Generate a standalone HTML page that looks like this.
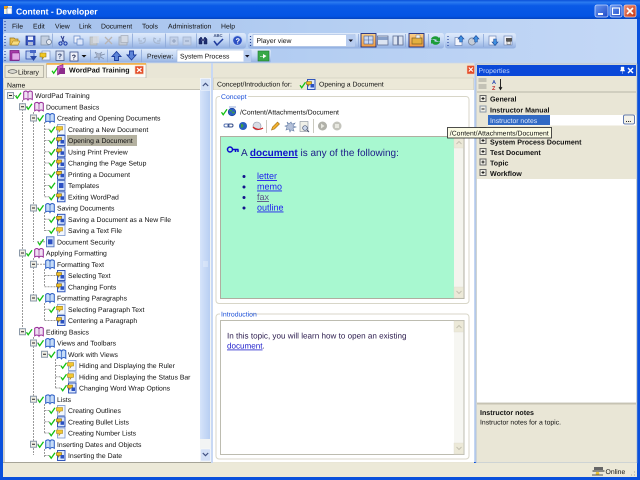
<!DOCTYPE html>
<html><head><meta charset="utf-8"><title>Content - Developer</title>
<style>
html,body{margin:0;padding:0;width:640px;height:480px;overflow:hidden;background:#0a50dc}
svg{display:block}
text{font-family:"Liberation Sans",Arial,sans-serif;font-size:6.85px;fill:#111;white-space:pre;text-rendering:geometricPrecision}
.b{font-weight:bold;font-size:7.1px}
.lk{fill:#2222ee;text-decoration:underline}
</style></head><body>
<svg width="640" height="480" viewBox="0 0 640 480" xmlns="http://www.w3.org/2000/svg">
<defs>
<linearGradient id="tb" x1="0" y1="0" x2="0" y2="1"><stop offset="0" stop-color="#0a50d8"/><stop offset=".12" stop-color="#2a7af0"/><stop offset=".3" stop-color="#0a5ae6"/><stop offset=".85" stop-color="#0454e4"/><stop offset="1" stop-color="#0444c0"/></linearGradient>
<linearGradient id="tool" x1="0" y1="0" x2="0" y2="1"><stop offset="0" stop-color="#dfeafb"/><stop offset=".5" stop-color="#c2d6f4"/><stop offset="1" stop-color="#90aee0"/></linearGradient>
<linearGradient id="band" x1="0" y1="0" x2="1" y2="0"><stop offset="0" stop-color="#a4c0ec"/><stop offset=".5" stop-color="#b4cef2"/><stop offset="1" stop-color="#c4d8f6"/></linearGradient>
<linearGradient id="sb" x1="0" y1="0" x2="1" y2="0"><stop offset="0" stop-color="#d6e4fa"/><stop offset="1" stop-color="#b8cef2"/></linearGradient>
<linearGradient id="btnb" x1="0" y1="0" x2="1" y2="1"><stop offset="0" stop-color="#6a98f0"/><stop offset="1" stop-color="#1c48c8"/></linearGradient>
<linearGradient id="btnr" x1="0" y1="0" x2="1" y2="1"><stop offset="0" stop-color="#ec9078"/><stop offset="1" stop-color="#c83410"/></linearGradient>
<linearGradient id="org" x1="0" y1="0" x2="0" y2="1"><stop offset="0" stop-color="#fbd08a"/><stop offset="1" stop-color="#f29a3c"/></linearGradient>
<g id="c"><path d="M1.500 4.800l1.700 2.400 3.800-5.400" fill="none" stroke="#12c012" stroke-width="1.300"/></g>
<g id="p"><path d="M.7 2C2.600.3 4.600 1 5 2.800 5.400 1 7.400.3 9.300 2V9.500C7.400 8.200 5.600 8.700 5 10 4.400 8.700 2.600 8.200.7 9.500Z" fill="#f0e0f4" stroke="#962a96" stroke-width="1"/><path d="M5 3V9" stroke="#963a96" stroke-width=".7"/></g>
<g id="l"><path d="M.7 2C2.600.3 4.600 1 5 2.800 5.400 1 7.400.3 9.300 2V9.500C7.400 8.200 5.600 8.700 5 10 4.400 8.700 2.600 8.200.7 9.500Z" fill="#c6dcf8" stroke="#2a5cc4" stroke-width="1"/><path d="M5 3V9" stroke="#2a5cc4" stroke-width=".7"/></g>
<g id="y"><rect x="1.500" y=".5" width="7.500" height="10" fill="#f2f6fe" stroke="#7a96cc" stroke-width=".8"/><path d="M.5 2.500H6.500V6H4.500L3 8V6H.5Z" fill="#f4c830" stroke="#a88414" stroke-width=".6"/></g>
<g id="z"><rect x="1.500" y=".5" width="7.500" height="10" fill="#dce8fc" stroke="#2048b4" stroke-width=".9"/><path d="M.5 2.500H5.500V5.500H3.500L2.500 7V5.500H.5Z" fill="#f0c020" stroke="#806010" stroke-width=".6"/><rect x="4.500" y="5" width="3.500" height="3.500" fill="#2a50c0"/></g>
<g id="d"><rect x="1.500" y=".5" width="7.500" height="10" fill="#d4e2fa" stroke="#5072c0" stroke-width=".9"/><rect x="3" y="3" width="4.500" height="5" fill="#2c50c4"/></g>
<g id="e"><rect x=".5" y=".5" width="6" height="6" fill="#f0eee4" stroke="#8a98a8" stroke-width="1"/><path d="M2 3.500H5" stroke="#222" stroke-width="1"/></g>
<g id="x2"><rect x=".5" y=".5" width="6" height="6" fill="#f0eee4" stroke="#666" stroke-width="1"/><path d="M2 3.500H5M3.500 2V5" stroke="#222" stroke-width="1"/></g>
<g id="gr"><path d="M0 0v1M0 3v1M0 6v1M0 9v1" stroke="#27459c" stroke-width="1.200"/></g>
<g id="up"><path d="M0 6L4.500 1 9 6H6.500V10H2.500V6Z" fill="#5c84d8" stroke="#1c3c9c" stroke-width=".9"/></g>
<g id="dn"><path d="M0 5L4.500 10 9 5H6.500V1H2.500V5Z" fill="#5c84d8" stroke="#1c3c9c" stroke-width=".9"/></g>
<g id="us"><path d="M0 4L3 .5 6 4H4.300V7H1.700V4Z" fill="#3f8fe0" stroke="#1c4c9c" stroke-width=".6"/></g>
<g id="ds"><path d="M0 3.500L3 7 6 3.500H4.300V.5H1.700V3.500Z" fill="#3f8fe0" stroke="#1c4c9c" stroke-width=".6"/></g>
<g id="pg"><rect x=".5" y=".5" width="8" height="10" fill="#f4f6fc" stroke="#7088b8" stroke-width=".8"/></g>
</defs>

<!-- frame -->
<rect width="640" height="480" fill="#0a50dc"/>
<rect x="0" y="0" width="640" height="19" fill="url(#tb)"/>
<rect x="3" y="19" width="634" height="44" fill="url(#band)"/>
<!-- title -->
<rect x="4" y="6" width="8" height="8" fill="#f4f0d8"/><path d="M4 6h4v3H4z" fill="#e8a020"/><rect x="7" y="8" width="5" height="6" fill="#fff" stroke="#4070c0" stroke-width=".5"/>
<text x="16" y="14.500" style="font-size:8.600px;font-weight:bold;fill:#fff">Content - Developer</text>
<rect x="595" y="5" width="13" height="12" rx="2" fill="url(#btnb)" stroke="#c8d8fc" stroke-width=".8"/><rect x="598" y="13" width="5" height="2" fill="#fff"/>
<rect x="610" y="5" width="12" height="12" rx="2" fill="url(#btnb)" stroke="#c8d8fc" stroke-width=".8"/><rect x="612.500" y="8" width="7" height="6.500" fill="none" stroke="#fff" stroke-width="1.100"/>
<rect x="624" y="5" width="12" height="12" rx="2" fill="url(#btnr)" stroke="#f0d0c8" stroke-width=".8"/><path d="M627 8l6 6M633 8l-6 6" stroke="#fff" stroke-width="1.600"/>
<!-- menu -->
<use href="#gr" x="5" y="21"/>
<text x="12" y="28.500">File</text><text x="33" y="28.500">Edit</text><text x="55" y="28.500">View</text><text x="79" y="28.500">Link</text><text x="101" y="28.500">Document</text><text x="142" y="28.500">Tools</text><text x="168" y="28.500">Administration</text><text x="221" y="28.500">Help</text>

<!-- toolbar row 1 -->
<rect x="3" y="33" width="243" height="15.500" rx="2.500" fill="url(#tool)"/>
<rect x="248" y="33" width="196" height="15.500" rx="2.500" fill="url(#tool)"/>
<rect x="445" y="33" width="71" height="15.500" rx="2.500" fill="url(#tool)"/>
<use href="#gr" x="5" y="36"/><use href="#gr" x="250.500" y="36"/><use href="#gr" x="448" y="36"/>
<path d="M10 38h4l1 1h3v6h-8z" fill="#eac050" stroke="#9a7414" stroke-width=".7"/><path d="M11 45l2-4h7l-2 4z" fill="#f8dc80" stroke="#9a7414" stroke-width=".5"/>
<rect x="26" y="36" width="9" height="9" fill="#3c58c0" stroke="#18308c" stroke-width=".7"/><rect x="28" y="36.500" width="5" height="3.500" fill="#e8eefc"/><rect x="28" y="42" width="5" height="3" fill="#b0bcd8"/>
<rect x="41" y="36" width="8" height="9" fill="#c4cfe0" stroke="#7c8ca4" stroke-width=".7"/><circle cx="49" cy="42" r="2.500" fill="#e4e8f0" stroke="#6c7c94" stroke-width=".8"/>
<path d="M52.500 33.500v14" stroke="#8ca8d8" stroke-width=".8"/>
<path d="M64 36l-2 6M61 36l3 6" stroke="#2a3a8c" stroke-width="1" fill="none"/><circle cx="60.500" cy="43.500" r="1.600" fill="none" stroke="#1838a8" stroke-width="1"/><circle cx="65.500" cy="43.500" r="1.600" fill="none" stroke="#1838a8" stroke-width="1"/>
<rect x="74" y="36" width="6" height="7" fill="#eef2fc" stroke="#6084c4" stroke-width=".7"/><rect x="77" y="39" width="6" height="6" fill="#dce6fa" stroke="#6084c4" stroke-width=".7"/>
<rect x="90" y="37" width="7" height="8" fill="#c8c8c4" stroke="#a8a8a4" stroke-width=".7" opacity=".8"/><rect x="93" y="36" width="6" height="7" fill="#d8dce4" opacity=".8"/>
<path d="M105 37l7 7M112 37l-7 7" stroke="#b8b4b4" stroke-width="1.300"/>
<rect x="119" y="37" width="8" height="8" fill="#c4ccd8" stroke="#a0a8b4" stroke-width=".8"/><rect x="121" y="35.500" width="7" height="7" fill="#d4dae4" stroke="#a4acb8" stroke-width=".7"/>
<path d="M132.500 33.500v14" stroke="#8ca8d8" stroke-width=".8"/>
<path d="M139 43c5 1 7-1 6-5l-2 1M139 38v3h3" fill="none" stroke="#a4b4cc" stroke-width="1"/>
<path d="M160 43c-5 1-7-1-6-5l2 1M160 38v3h-3" fill="none" stroke="#a4b4cc" stroke-width="1"/>
<path d="M165.500 33.500v14" stroke="#8ca8d8" stroke-width=".8"/>
<rect x="170" y="37" width="8" height="8" fill="#c2d0e8" stroke="#a4b4d0" stroke-width=".8"/><path d="M172 41h4M174 39v4" stroke="#90a0bc"/>
<rect x="183" y="37" width="8" height="8" fill="#c2d0e8" stroke="#a4b4d0" stroke-width=".8"/><path d="M185 41h4" stroke="#90a0bc"/>
<path d="M196.500 33.500v14" stroke="#8ca8d8" stroke-width=".8"/>
<path d="M199 44v-5l2-2 1 1v6zM204 44v-6l1-1 2 2v5z" fill="#1c2c70" stroke="#101c50" stroke-width=".5"/><rect x="201" y="39" width="4" height="2" fill="#404880"/>
<text x="213.500" y="37" style="font-size:4.200px;font-weight:bold;fill:#33487a">ABC</text><path d="M214 41l3 4 6-6" fill="none" stroke="#1e3a9c" stroke-width="1.500"/>
<path d="M229.500 33.500v14" stroke="#8ca8d8" stroke-width=".8"/>
<circle cx="237.500" cy="40.500" r="4.800" fill="#2c50c4" stroke="#b8cef4" stroke-width=".9"/><text x="235.500" y="43.500" style="font-size:7.500px;font-weight:bold;fill:#fff">?</text>
<!-- player view combo -->
<rect x="253" y="34.500" width="102" height="12" fill="#fff" stroke="#9fb8e0" stroke-width=".6"/><rect x="346" y="35" width="9" height="11" fill="#b8cdf0"/><path d="M348.500 39.500h4.500l-2.250 2.500z" fill="#112"/>
<text x="256.500" y="43">Player view</text>
<path d="M358.500 34v13" stroke="#8ca8d8" stroke-width=".8"/>
<rect x="361" y="33.500" width="15" height="13.500" fill="url(#org)" stroke="#1c2c80" stroke-width=".9"/><rect x="364" y="36" width="9" height="8" fill="#c8d8f4" stroke="#5a6c98" stroke-width=".7"/><path d="M368.500 36v8M364 40h9" stroke="#5a6c98" stroke-width=".6"/>
<rect x="377.500" y="36" width="10.500" height="9" fill="#dce4f2" stroke="#5f6f94" stroke-width=".8"/><rect x="378" y="37" width="9.500" height="3" fill="#88a0c8"/>
<rect x="393" y="36" width="10" height="9" fill="#dce4f2" stroke="#5f6f94" stroke-width=".8"/><path d="M398 36v9" stroke="#5f6f94" stroke-width="1.500"/>
<path d="M405.500 34v13" stroke="#8ca8d8" stroke-width=".8"/>
<rect x="409" y="33.500" width="15" height="13.500" fill="url(#org)" stroke="#1c2c80" stroke-width=".9"/><path d="M412 38h10v6h-10z" fill="#e4b040" stroke="#806020" stroke-width=".7"/><path d="M416 35h4v3h-4z" fill="#f4f4f4" stroke="#777" stroke-width=".5"/>
<path d="M428.500 34v13" stroke="#8ca8d8" stroke-width=".8"/>
<path d="M431 39c1-3 6-4 8-1l1-1v4h-4l1-1c-2-1-4-1-5 0z" fill="#1c9c38"/><path d="M440 42c-1 3-6 4-8 1l-1 1v-4h4l-1 1c2 1 4 1 5 0z" fill="#1c9c38"/>
<rect x="455" y="37.500" width="7" height="8" fill="#f4f6fc" stroke="#7088b8" stroke-width=".7"/><use href="#us" x="458" y="35"/>
<circle cx="472" cy="41.500" r="3.600" fill="#c4ccd8" stroke="#6a7a96" stroke-width=".7"/><use href="#us" x="473" y="35"/>
<path d="M483.500 34v13" stroke="#8ca8d8" stroke-width=".8"/>
<rect x="489" y="36" width="7" height="9" fill="#f4f6fc" stroke="#7088b8" stroke-width=".7"/><use href="#ds" x="492" y="38.500"/>
<rect x="504" y="36" width="8" height="9" fill="#eef0f8" stroke="#7088b8" stroke-width=".7"/><rect x="506" y="38" width="6" height="3.500" fill="#555"/><rect x="507" y="41.500" width="3.500" height="3" fill="#e8e8e8" stroke="#444" stroke-width=".4"/>

<!-- toolbar row 2 -->
<rect x="3" y="49" width="268" height="14" rx="2.500" fill="url(#tool)"/>
<use href="#gr" x="5" y="51"/>
<rect x="10" y="50.500" width="9" height="10" fill="#a83aa8" stroke="#70107a" stroke-width=".7"/><rect x="12" y="53" width="7.500" height="7" fill="#e0a8e8" stroke="#70107a" stroke-width=".5"/>
<rect x="26" y="51" width="8" height="8" fill="#b8ccf0" stroke="#2848a8" stroke-width=".8"/><path d="M30 56h7l-3.500 5z" fill="#2848a8"/><path d="M30 50h6v3h-6z" fill="#4868c8"/>
<rect x="42" y="51" width="8" height="9" fill="#f0f4fc" stroke="#7a8fc0" stroke-width=".7"/><path d="M40 53h6v4h-2l-1.500 2v-2h-2.500z" fill="#f2c824" stroke="#9a7810" stroke-width=".6"/>
<rect x="56" y="51" width="8" height="9.500" fill="#dce4f4" stroke="#4a5a88" stroke-width=".8"/><text x="57.800" y="58.500" style="font-size:7px;font-weight:bold;fill:#2a3a68">?</text>
<rect x="70" y="52" width="8" height="9" fill="#f0f2fa" stroke="#3a4c88" stroke-width=".8"/><text x="71.800" y="59.500" style="font-size:7px;font-weight:bold;fill:#101840">?</text>
<path d="M81.500 55h5l-2.500 2.500z" fill="#111"/>
<path d="M90.500 49.500v13" stroke="#8ca8d8" stroke-width=".8"/>
<path d="M95 52l4 2 3-2-2 3 5-1-5 2 4 3-4-2-1 3-1-3-4 1 3-2z" fill="#aab6cc" stroke="#7c8aa4" stroke-width=".5"/>
<path d="M107.500 49.500v13" stroke="#8ca8d8" stroke-width=".8"/>
<use href="#up" x="112" y="50.500"/><use href="#dn" x="127" y="50"/>
<path d="M141.500 49.500v13" stroke="#8ca8d8" stroke-width=".8"/>
<text x="147" y="58.500">Preview:</text>
<rect x="177" y="50" width="74" height="12" fill="#fff" stroke="#9fb8e0" stroke-width=".6"/><rect x="243.500" y="50.500" width="7.500" height="11" fill="#b8cdf0"/><path d="M245 55h4.500l-2.250 2.500z" fill="#112"/>
<text x="180" y="58.500">System Process</text>
<rect x="258" y="51" width="11" height="10" fill="#38a848" stroke="#1e7830" stroke-width=".6"/><path d="M260 56h3v-2l3.500 2-3.500 2.500v-2h-3z" fill="#fff"/>

<!-- main beige area -->
<rect x="3" y="63" width="471" height="414" fill="#e9e6d6"/>
<rect x="476" y="63" width="161" height="414" fill="#e9e6d6"/>
<rect x="474" y="63" width="2" height="399" fill="#c4d6f2"/>
<rect x="3" y="62.500" width="634" height=".8" fill="#c8d6ea"/>
<!-- tabs -->
<rect x="5" y="65.500" width="38.500" height="12" fill="#ece9d8" stroke="#a6a498" stroke-width=".7"/>
<ellipse cx="12.500" cy="71.500" rx="4.500" ry="1.800" fill="#d8d8d0" stroke="#444" stroke-width=".6"/>
<text x="18" y="74.500">Library</text>
<rect x="46.500" y="64" width="99.500" height="14" fill="#fbfbf6" stroke="#a8a498" stroke-width=".6"/><rect x="46.500" y="63.200" width="99.500" height="1.500" fill="#f3a830"/>
<use href="#c" x="50.500" y="66"/>
<path d="M57.500 66.500L63 64.500V72L57.500 75Z" fill="#c858c8" stroke="#7a1a7a" stroke-width=".6"/><path d="M60 68h5v6h-7z" fill="#8c2c8c"/>
<text class="b" x="69" y="72.500">WordPad Training</text>
<rect x="135" y="66" width="8.500" height="8" fill="#e44c28" stroke="#f4d0b8" stroke-width=".6"/><path d="M137 68l4.500 4M141.500 68l-4.500 4" stroke="#fff" stroke-width="1.200"/>
<!-- tree pane -->
<rect x="3" y="78" width="209" height="385" fill="#fff"/>
<rect x="3.500" y="78" width="1" height="384" fill="#a6a498"/>
<rect x="4" y="78" width="196" height="12" fill="#ece9d8"/><path d="M4 89.500H200" stroke="#c4c2b4"/>
<text x="7" y="87.500">Name</text>
<!-- tree scrollbar -->
<rect x="200" y="78" width="11" height="384" fill="#f2f4f4"/>
<rect x="200" y="90" width="10" height="349" fill="url(#sb)"/>
<rect x="200.500" y="78.500" width="10" height="12" rx="1" fill="#d3e0f6" stroke="#fff" stroke-width=".4"/><path d="M202.800 86l2.700-2.700 2.700 2.700" fill="none" stroke="#405080" stroke-width="1.200"/>
<rect x="200.500" y="449" width="10" height="12" rx="1" fill="#d3e0f6" stroke="#fff" stroke-width=".4"/><path d="M202.800 453l2.700 2.700 2.700-2.700" fill="none" stroke="#405080" stroke-width="1.200"/>
<path d="M203 262h5M203 264h5M203 266h5" stroke="#eef4fc" stroke-width=".8"/>

<!-- tree lines -->
<g stroke="#9a9a9a" stroke-width="1" stroke-dasharray="2 1" fill="none">
<path d="M22.500 100v232M33.500 112v130M33.500 258v40M33.500 337v118M44.500 122v75M44.500 212v19M44.500 269v18M44.500 303v18M44.500 404v29M44.500 449v8M55.500 359v29"/>
<path d="M13 95.500h4M26 106.750h3M37 118h3M37 208h3M37 241.750h12M37 264.250h8M37 298h3M37 343h3M37 399.250h3M37 444.250h3M48 354.250h3"/>
<path d="M44.500 129.250h6M44.500 140.500h6M44.500 151.750h6M44.500 163h6M44.500 174.250h6M44.500 185.500h6M44.500 196.750h6M44.500 219.250h6M44.500 230.500h6M44.500 275.500h11M44.500 286.750h11M44.500 309.250h6M44.500 320.500h11M44.500 410.500h6M44.500 421.750h6M44.500 433h6M44.500 455.500h6M55.500 365.500h6M55.500 376.750h6M55.500 388h6"/>
</g>
<!-- tree expanders -->
<use href="#e" x="7" y="92"/><use href="#e" x="19" y="103.250"/><use href="#e" x="30" y="114.500"/><use href="#e" x="30" y="204.500"/><use href="#e" x="19" y="249.500"/><use href="#e" x="30" y="260.750"/><use href="#e" x="30" y="294.500"/><use href="#e" x="19" y="328.250"/><use href="#e" x="30" y="339.500"/><use href="#e" x="41" y="350.750"/><use href="#e" x="30" y="395.750"/><use href="#e" x="30" y="440.750"/>
<!-- selected bg -->
<rect x="67" y="135" width="70" height="11" fill="#b4b1a0"/>
<!-- tree rows -->
<use href="#c" x="14" y="91"/><use href="#p" x="23" y="90"/><text x="35" y="98">WordPad Training</text>
<use href="#c" x="25" y="102"/><use href="#p" x="34" y="101.300"/><text x="46" y="109.300">Document Basics</text>
<use href="#c" x="36.500" y="113.500"/><use href="#l" x="45" y="112.500"/><text x="57" y="120.500">Creating and Opening Documents</text>
<use href="#c" x="48" y="125"/><use href="#y" x="56" y="124"/><text x="68" y="131.800">Creating a New Document</text>
<use href="#c" x="48" y="136"/><use href="#z" x="56" y="135"/><text x="68" y="143">Opening a Document</text>
<use href="#c" x="48" y="147.500"/><use href="#z" x="56" y="146.300"/><text x="68" y="154.300">Using Print Preview</text>
<use href="#c" x="48" y="158.500"/><use href="#z" x="56" y="157.500"/><text x="68" y="165.500">Changing the Page Setup</text>
<use href="#c" x="48" y="170"/><use href="#z" x="56" y="168.800"/><text x="68" y="176.800">Printing a Document</text>
<use href="#c" x="48" y="181"/><use href="#d" x="56" y="180"/><text x="68" y="188">Templates</text>
<use href="#c" x="48" y="192.500"/><use href="#z" x="56" y="191.300"/><text x="68" y="199.300">Exiting WordPad</text>
<use href="#c" x="36.500" y="203.500"/><use href="#l" x="45" y="202.500"/><text x="57" y="210.500">Saving Documents</text>
<use href="#c" x="48" y="215"/><use href="#z" x="56" y="213.800"/><text x="68" y="221.800">Saving a Document as a New File</text>
<use href="#c" x="48" y="226"/><use href="#y" x="56" y="225"/><text x="68" y="233">Saving a Text File</text>
<use href="#c" x="36.500" y="237.500"/><use href="#d" x="45" y="236.300"/><text x="57" y="244.300">Document Security</text>
<use href="#c" x="25" y="248.500"/><use href="#p" x="34" y="247.500"/><text x="46" y="255.500">Applying Formatting</text>
<use href="#l" x="45" y="258.800"/><text x="57" y="266.800">Formatting Text</text>
<use href="#z" x="56" y="270"/><text x="68" y="278">Selecting Text</text>
<use href="#z" x="56" y="281.300"/><text x="68" y="289.300">Changing Fonts</text>
<use href="#c" x="36.500" y="293.500"/><use href="#l" x="45" y="292.500"/><text x="57" y="300.500">Formatting Paragraphs</text>
<use href="#c" x="48" y="305"/><use href="#y" x="56" y="303.800"/><text x="68" y="311.800">Selecting Paragraph Text</text>
<use href="#z" x="56" y="315"/><text x="68" y="323">Centering a Paragraph</text>
<use href="#c" x="25" y="327.500"/><use href="#p" x="34" y="326.300"/><text x="46" y="334.300">Editing Basics</text>
<use href="#c" x="36.500" y="338.500"/><use href="#l" x="45" y="337.500"/><text x="57" y="345.500">Views and Toolbars</text>
<use href="#c" x="48" y="350"/><use href="#l" x="56.500" y="348.800"/><text x="68" y="356.800">Work with Views</text>
<use href="#c" x="59.500" y="361"/><use href="#y" x="67" y="360"/><text x="79" y="368">Hiding and Displaying the Ruler</text>
<use href="#c" x="59.500" y="372.500"/><use href="#y" x="67" y="371.300"/><text x="79" y="379.300">Hiding and Displaying the Status Bar</text>
<use href="#c" x="59.500" y="383.500"/><use href="#z" x="67" y="382.500"/><text x="79" y="390.500">Changing Word Wrap Options</text>
<use href="#c" x="36.500" y="395"/><use href="#l" x="45" y="393.800"/><text x="57" y="401.800">Lists</text>
<use href="#c" x="48" y="406"/><use href="#y" x="56" y="405"/><text x="68" y="413">Creating Outlines</text>
<use href="#c" x="48" y="417.500"/><use href="#z" x="56" y="416.300"/><text x="68" y="424.300">Creating Bullet Lists</text>
<use href="#c" x="48" y="428.500"/><use href="#y" x="56" y="427.500"/><text x="68" y="435.500">Creating Number Lists</text>
<use href="#c" x="36.500" y="440"/><use href="#l" x="45" y="438.800"/><text x="57" y="446.800">Inserting Dates and Objects</text>
<use href="#c" x="48" y="451"/><use href="#z" x="56" y="450"/><text x="68" y="458">Inserting the Date</text>
<rect x="3" y="462" width="209" height="1" fill="#a6a498"/>

<!-- splitter -->
<rect x="211" y="63" width="2" height="400" fill="#c8d8f4"/>

<!-- center pane -->
<rect x="467" y="65.500" width="7.500" height="8.500" fill="#e44c28" stroke="#f4d0b8" stroke-width=".5"/><path d="M468.800 67.500l4 4M472.800 67.500l-4 4" stroke="#fff" stroke-width="1.100"/>
<rect x="213.500" y="78" width="260" height="12" fill="#ece9d8" stroke="#c8c6b8" stroke-width=".5"/>
<rect x="213" y="90" width="261" height="372" fill="#fff"/>
<text x="217" y="86.500">Concept/Introduction for:</text>
<use href="#c" x="298.500" y="80.500"/><use href="#z" x="306" y="79"/><text x="319" y="86.500">Opening a Document</text>

<rect x="216" y="96.500" width="253" height="207" rx="3" fill="#fff" stroke="#d8d6c8" stroke-width="1"/>
<rect x="220" y="93" width="28" height="7" fill="#fff"/>
<text x="221" y="99" style="fill:#1c50d8">Concept</text>
<use href="#c" x="220" y="107.500"/><circle cx="232" cy="112" r="3.800" fill="#2a60c0" stroke="#18389c" stroke-width=".6"/><path d="M229 111c2-2 3-1 3 1s2 2 3 0" fill="#40a040"/><rect x="229" y="106" width="7" height="2" fill="#c8d4ec"/>
<text x="240" y="114.500">/Content/Attachments/Document</text>
<rect x="224" y="124" width="5" height="3" rx="1.500" fill="none" stroke="#5a76b4" stroke-width="1"/><rect x="228" y="124" width="5" height="3" rx="1.500" fill="none" stroke="#344c88" stroke-width="1"/>
<circle cx="243" cy="126" r="4" fill="#2a60c0"/><path d="M241 124c2 0 3 1 2 3l-2 1z" fill="#40a040"/>
<circle cx="257" cy="126" r="4" fill="#d8dce4" stroke="#8c94a8" stroke-width=".6"/><path d="M253 127c3 3 7 3 10 1" fill="none" stroke="#d02020" stroke-width="1.300"/>
<path d="M266.500 120v13" stroke="#b4b2a4" stroke-width=".7"/>
<path d="M271.500 130l1-3 5-5 2 2-5 5z" fill="#f0b030" stroke="#a0701c" stroke-width=".6"/>
<path d="M287 122l2 2 2-2 1 2 3-1-2 3 3 1-3 1 1 3-3-1-1 2-1-3-3 1 1-3-2-1 3-1z" fill="#b4c0d8" stroke="#6880a8" stroke-width=".6"/>
<rect x="300" y="121.500" width="8" height="10" fill="#f0f0e8" stroke="#88909c" stroke-width=".6"/><circle cx="305" cy="128" r="2.300" fill="#ccd8ec" stroke="#445070" stroke-width=".7"/><path d="M307 130l2 2" stroke="#445070"/>
<path d="M313.500 119v14" stroke="#b4b2a4" stroke-width=".7"/>
<circle cx="322.500" cy="126" r="4.500" fill="#b0b0a8"/><path d="M321 123.500l3.500 2.500-3.500 2.500z" fill="#e8e8e0"/>
<circle cx="337" cy="126" r="4.500" fill="#c4c4bc"/><rect x="335" y="124" width="4" height="4" fill="#e8e8e0"/>

<rect x="220.500" y="136.500" width="243.500" height="162" fill="#a8f8d0" stroke="#b0aea0" stroke-width="1"/>
<rect x="454" y="137" width="9.500" height="161" fill="#f4f4ee"/>
<rect x="454" y="137" width="9.500" height="11" fill="#ece9d8" stroke="#dedcd0" stroke-width=".4"/><path d="M456.500 144l2.500-2.500 2.500 2.500" fill="none" stroke="#c4c2b2" stroke-width="1"/>
<rect x="454" y="287" width="9.500" height="11" fill="#ece9d8" stroke="#dedcd0" stroke-width=".4"/><path d="M456.500 291l2.500 2.500 2.500-2.500" fill="none" stroke="#c4c2b2" stroke-width="1"/>
<circle cx="230" cy="149.500" r="2.500" fill="none" stroke="#0a0acc" stroke-width="1.500"/><path d="M232.500 149.500h6M235.500 149.500v2.500M238 149.500v2.500" stroke="#0a0acc" stroke-width="1.500" fill="none"/>
<text x="241" y="156" style="font-size:10px;fill:#1c1c88">A <tspan style="font-size:10px;font-weight:bold;fill:#1010cc;text-decoration:underline">document</tspan> is any of the following:</text>
<g fill="#12128c"><circle cx="244" cy="176.500" r="1.500"/><circle cx="244" cy="187" r="1.500"/><circle cx="244" cy="197.500" r="1.500"/><circle cx="244" cy="208" r="1.500"/></g>
<text class="lk" x="257" y="179" style="font-size:9px">letter</text><text class="lk" x="257" y="189.500" style="font-size:9px">memo</text><text class="lk" x="257" y="200" style="font-size:9px;fill:#5a4f88">fax</text><text class="lk" x="257" y="210.500" style="font-size:9px">outline</text>

<rect x="216" y="314" width="253" height="145" rx="3" fill="#fff" stroke="#d8d6c8" stroke-width="1"/>
<rect x="220" y="311" width="30" height="7" fill="#fff"/>
<text x="221" y="316.500" style="fill:#1c50d8">Introduction</text>
<rect x="220.500" y="320.500" width="243.500" height="134" fill="#fff" stroke="#bdbcb0" stroke-width="1"/>
<rect x="454" y="321" width="9.500" height="133" fill="#f6f6f2"/>
<rect x="454" y="321" width="9.500" height="11" fill="#ece9d8" stroke="#dedcd0" stroke-width=".4"/><path d="M456.500 328l2.500-2.500 2.500 2.500" fill="none" stroke="#c4c2b2" stroke-width="1"/>
<rect x="454" y="443" width="9.500" height="11" fill="#ece9d8" stroke="#dedcd0" stroke-width=".4"/><path d="M456.500 447l2.500 2.500 2.500-2.500" fill="none" stroke="#c4c2b2" stroke-width="1"/>
<text x="227" y="338.500" style="font-size:8.100px;fill:#2a1a4c">In this topic, you will learn how to open an existing</text>
<text x="227" y="348.500" style="font-size:8.100px;fill:#2a1a4c"><tspan style="font-size:8.100px;fill:#2222cc;text-decoration:underline">document</tspan>.</text>

<!-- properties -->
<rect x="476" y="64" width="161" height="399" fill="#e9e6d6" stroke="#8ea8d0" stroke-width=".6"/>
<rect x="477" y="65" width="159" height="11" fill="#0a48d8"/>
<text x="478.500" y="73" style="fill:#c4d6fa">Properties</text>
<path d="M621 67h3v3l1 1h-5l1-1zM622.500 71v3" fill="#fff" stroke="#fff" stroke-width=".4"/>
<path d="M628 68l5 5M633 68l-5 5" stroke="#fff" stroke-width="1.400"/>
<rect x="478.500" y="78" width="8" height="4" fill="#c4c2b6"/><rect x="478.500" y="84" width="8" height="5" fill="#c4c2b6"/>
<text x="492" y="84" style="font-size:5.500px;font-weight:bold;fill:#2040b0">A</text><text x="492" y="90" style="font-size:5.500px;font-weight:bold;fill:#c02020">Z</text>
<path d="M500.500 79v10M499 87l1.500 2.500 1.500-2.500" stroke="#111" fill="none" stroke-width=".9"/>
<path d="M477 92h159" stroke="#b8b6a8"/>
<rect x="477" y="93" width="159" height="310" fill="#fff"/>
<rect x="477" y="93" width="159" height="22" fill="#e9e6d6"/>
<rect x="477" y="125.500" width="159" height="53.500" fill="#e9e6d6"/>
<rect x="477" y="115" width="11" height="10.500" fill="#e9e6d6"/>
<use href="#x2" x="479.500" y="95"/><text class="b" x="490" y="101.500">General</text>
<use href="#e" x="479.500" y="105.500"/><text class="b" x="490" y="112.500">Instructor Manual</text>
<rect x="488" y="115" width="62" height="10" fill="#316ac5"/>
<text x="490" y="122.800" style="fill:#e0e8fa">Instructor notes</text>
<rect x="623.500" y="115" width="11" height="9" rx="1.500" fill="#f4f2e8" stroke="#3c5ca0" stroke-width=".8"/><text x="625.500" y="122" style="font-size:7px;font-weight:bold;fill:#222">...</text>
<use href="#x2" x="479.500" y="127"/>
<use href="#x2" x="479.500" y="137"/><text class="b" x="490" y="144.500">System Process Document</text>
<use href="#x2" x="479.500" y="148"/><text class="b" x="490" y="154.800">Test Document</text>
<use href="#x2" x="479.500" y="158.500"/><text class="b" x="490" y="165.500">Topic</text>
<use href="#x2" x="479.500" y="169"/><text class="b" x="490" y="176">Workflow</text>
<rect x="477" y="404" width="159" height="58" fill="#e9e6d6"/>
<path d="M477 404h159M477 403h159" stroke="#bab8a8" stroke-width=".7"/>
<text class="b" x="480" y="415">Instructor notes</text>
<text x="480" y="424.500">Instructor notes for a topic.</text>
<!-- tooltip -->
<rect x="447.500" y="127.500" width="104" height="10.500" fill="#fbfbe4" stroke="#222" stroke-width=".8"/>
<text x="449.800" y="135.500">/Content/Attachments/Document</text>
<!-- status -->
<rect x="3" y="463" width="634" height="14" fill="#ece9d8"/>
<rect x="594" y="467" width="9" height="3" fill="#666"/><rect x="592.500" y="470" width="12" height="2" fill="#8a8a84"/><circle cx="597.500" cy="473.500" r="1.800" fill="#e8c030"/><path d="M592 475h11" stroke="#555"/>
<text x="605.500" y="474">Online</text>
<path d="M631 475h1M634 475h1M634 472h1" stroke="#a8a698"/>
</svg>
</body></html>
